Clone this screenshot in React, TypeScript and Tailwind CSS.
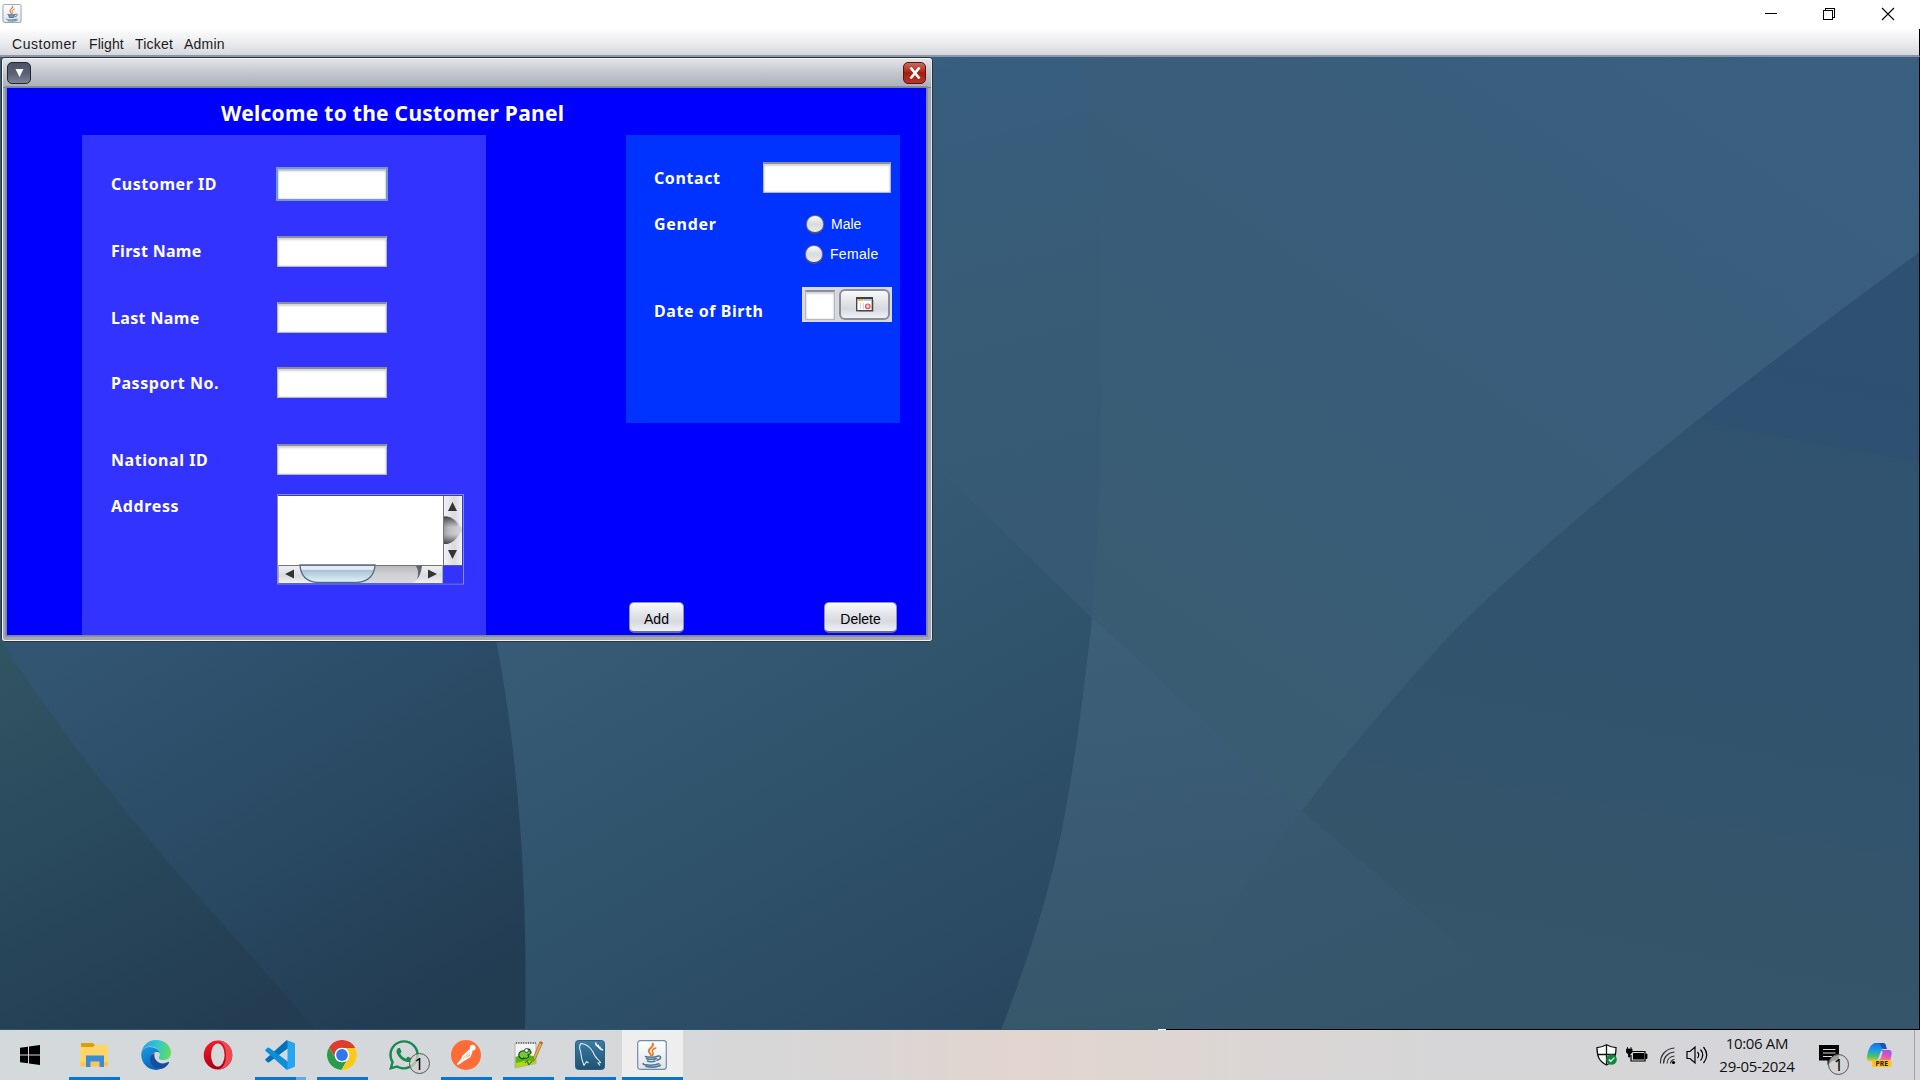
import React from "react";
import { FaWhatsapp } from "react-icons/fa";

const ARIAL = "font-['Liberation_Sans',Arial,sans-serif]";
const HUMANIST = "font-['Noto_Sans','Open_Sans',sans-serif]";

function JavaIcon({ className, id }: { className: string; id: string }) {
  return (
    <svg viewBox="0 0 30 30" className={className}>
      <defs>
        <linearGradient id={id} x1="0" y1="0" x2="0" y2="1">
          <stop offset="0" stopColor="#ffffff" />
          <stop offset="1" stopColor="#dfe3e8" />
        </linearGradient>
      </defs>
      <rect x="0.7" y="0.7" width="28.6" height="28.6" rx="2.5" fill={`url(#${id})`} stroke="#6f8da8" strokeWidth="1.2" />
      <g fill="none" strokeLinecap="round">
        <path d="M15.800 3.500c1.900 3.600-5.600 4.800-3.800 8.500.6 1.200 1.800 1.700 2 3.500" stroke="#e8792b" strokeWidth="1.900" />
        <path d="M18.800 8c-3.300 1.200-4.500 2.800-3 4.500.9 1 .4 2-.6 2.900" stroke="#e8792b" strokeWidth="1.500" />
        <path d="M8.500 16.500c2 .9 9.500.9 11.500 0M9.500 18.500c1.500 1 8 1 9.700 0M10.500 21c1.500.9 6 .9 7.500 0" stroke="#4e7896" strokeWidth="1.600" />
        <path d="M20.500 16.200c4-1.200 4.500 2.500-.5 4" stroke="#4e7896" strokeWidth="1.500" />
        <path d="M6.500 23.500c-3 1.500 10 2.700 15.500.300M9 26.600c5 .8 12 .5 14.500-1.400" stroke="#4e7896" strokeWidth="1.500" />
      </g>
    </svg>
  );
}

function TitleBar() {
  return (
    <header className="flex h-[29px] items-start justify-between bg-white">
      <JavaIcon id="jt" className="ml-[2px] mt-[4px] h-[19px] w-[20px]" />
      <svg width="180" height="29" fill="none" stroke="#000" shapeRendering="crispEdges">
        <path d="M25 13.500h12" />
        <path d="M83.500 10.500h9v9h-9zM85.500 10v-1.500h9v9H93" />
        <path d="M142 8l12 12M154 8l-12 12" shapeRendering="auto" strokeWidth="1.100" />
      </svg>
    </header>
  );
}

function MenuBar() {
  return (
    <nav
      className={`flex h-[28px] items-start border-b-2 border-[#8e95a3] border-r border-r-black bg-gradient-to-b from-[#fdfdfd] via-[#ecedf0] to-[#d5d8de] pl-3 pt-[7px] text-[14px] leading-[17px] text-[#1c1c1c] ${ARIAL}`}
    >
      <span className="w-[77px] tracking-[0.55px]">Customer</span>
      <span className="w-[46px] tracking-[0.1px]">Flight</span>
      <span className="w-[49px] tracking-[0.2px]">Ticket</span>
      <span className="tracking-[0.2px]">Admin</span>
    </nav>
  );
}

function Wallpaper() {
  return (
    <svg className="absolute inset-0" width="1920" height="973" viewBox="0 57 1920 973" preserveAspectRatio="none">
      <defs>
        <linearGradient id="sky" gradientUnits="userSpaceOnUse" x1="1800" y1="57" x2="1250" y2="850">
          <stop offset="0" stopColor="#3a5f80" />
          <stop offset="0.5" stopColor="#395d79" />
          <stop offset="1" stopColor="#395c70" />
        </linearGradient>
        <linearGradient id="fan" gradientUnits="userSpaceOnUse" x1="1100" y1="620" x2="1160" y2="1030">
          <stop offset="0" stopColor="#3c6077" />
          <stop offset="0.5" stopColor="#3a5a74" />
          <stop offset="1" stopColor="#365669" />
        </linearGradient>
        <linearGradient id="right" gradientUnits="userSpaceOnUse" x1="1800" y1="300" x2="1660" y2="1030">
          <stop offset="0" stopColor="#2f5270" />
          <stop offset="0.5" stopColor="#31536d" />
          <stop offset="1" stopColor="#34556a" />
        </linearGradient>
        <linearGradient id="low" gradientUnits="userSpaceOnUse" x1="1290" y1="830" x2="1380" y2="1030">
          <stop offset="0" stopColor="#38586f" />
          <stop offset="1" stopColor="#34556a" />
        </linearGradient>
        <linearGradient id="upper" gradientUnits="userSpaceOnUse" x1="930" y1="57" x2="1060" y2="560">
          <stop offset="0" stopColor="#385e80" />
          <stop offset="0.5" stopColor="#385c76" />
          <stop offset="1" stopColor="#375973" />
        </linearGradient>
        <linearGradient id="mid" gradientUnits="userSpaceOnUse" x1="560" y1="560" x2="860" y2="1100">
          <stop offset="0" stopColor="#395d78" />
          <stop offset="0.5" stopColor="#30536c" />
          <stop offset="1" stopColor="#29465f" />
        </linearGradient>
        <linearGradient id="arc" gradientUnits="userSpaceOnUse" x1="130" y1="620" x2="380" y2="1040">
          <stop offset="0" stopColor="#325572" />
          <stop offset="0.5" stopColor="#2a4a64" />
          <stop offset="1" stopColor="#223c52" />
        </linearGradient>
        <linearGradient id="left" gradientUnits="userSpaceOnUse" x1="0" y1="650" x2="200" y2="1040">
          <stop offset="0" stopColor="#315463" />
          <stop offset="0.55" stopColor="#28475b" />
          <stop offset="1" stopColor="#233c52" />
        </linearGradient>
        <clipPath id="hill">
          <path d="M1920 252C1750 375 1560 525 1454 631C1390 700 1340 760 1302 811L1560 1030H1920z" />
        </clipPath>
      </defs>
      <rect y="57" width="1920" height="973" fill="url(#sky)" />
      <path d="M1092 618L1302 811Q1233 895 1170 1030H980V618z" fill="url(#fan)" />
      <path d="M1920 252C1750 375 1560 525 1454 631C1390 700 1340 760 1302 811L1560 1030H1920z" fill="url(#right)" />
      <path d="M1302 811Q1222 905 1168 1030H1560z" fill="url(#low)" />
      <g clipPath="url(#hill)">
        <path d="M1600 405L1700 422L1920 462V200H1600z" fill="#2e5071" opacity="0.600" />
        <path d="M1300 750L1920 860V1030H1300z" fill="#36566a" opacity="0.350" />
      </g>
      <path d="M400 57H1080Q1094 120 1100 250Q1104 470 1092 618L930 470z" fill="url(#upper)" />
      <path d="M400 57L930 460L1092 618Q1080 730 1066 808Q1048 910 1001 1030H400z" fill="url(#mid)" />
      <path d="M0 600H488Q530 790 525 1030H0z" fill="url(#arc)" />
      <path d="M0 638C60 735 150 842 199 897L316 1030H0z" fill="url(#left)" />
      <path d="M0 1029.500H1158" stroke="#34536b" />
      <path d="M1158 1029.500h9" stroke="#fff" />
      <path d="M1166 1029.500H1920M1919.500 57V1030" stroke="#000" />
    </svg>
  );
}

function Field({ className }: { className: string }) {
  return (
    <div
      className={`shrink-0 border border-[#b4b6c0] border-t-2 border-t-[#8b8d98] bg-white shadow-[inset_0_2px_2px_#d4d4d6,inset_0_0_2px_#c8c8cc] ${className}`}
    />
  );
}

function Label({ className, children }: { className: string; children: string }) {
  return (
    <span className={`shrink-0 whitespace-nowrap text-[16px] font-bold leading-[20px] text-white ${HUMANIST} ${className}`}>
      {children}
    </span>
  );
}

const glossy = "bg-gradient-to-b from-[#f8f9fb] via-[#d6d9df] via-65% to-[#eef1f7]";

function AddressArea() {
  return (
    <svg width="187" height="91" className="shrink-0">
      <defs>
        <linearGradient id="track" x1="0" y1="0" x2="0" y2="1">
          <stop offset="0" stopColor="#b6b7ba" />
          <stop offset="0.5" stopColor="#cfd0d5" />
          <stop offset="1" stopColor="#d8d9df" />
        </linearGradient>
        <linearGradient id="thumb" x1="0" y1="0" x2="0" y2="1">
          <stop offset="0" stopColor="#dfe9f1" />
          <stop offset="0.25" stopColor="#e3edf4" />
          <stop offset="0.3" stopColor="#a9c1d5" />
          <stop offset="1" stopColor="#e3f4fb" />
        </linearGradient>
        <linearGradient id="btnh" x1="0" y1="0" x2="0" y2="1">
          <stop offset="0" stopColor="#f2f3f5" />
          <stop offset="0.6" stopColor="#d9dbdf" />
          <stop offset="1" stopColor="#f0f1f4" />
        </linearGradient>
        <linearGradient id="btnv" x1="0" y1="0" x2="1" y2="0">
          <stop offset="0" stopColor="#f2f3f5" />
          <stop offset="0.6" stopColor="#d9dbdf" />
          <stop offset="1" stopColor="#f0f1f4" />
        </linearGradient>
        <linearGradient id="hole" x1="0" y1="0" x2="1" y2="0">
          <stop offset="0" stopColor="#9a9b9f" />
          <stop offset="0.350" stopColor="#bfc0c5" />
          <stop offset="1" stopColor="#d4d5da" />
        </linearGradient>
        <linearGradient id="rim" x1="0" y1="0" x2="0" y2="1">
          <stop offset="0" stopColor="#333333" stopOpacity="0.9" />
          <stop offset="0.4" stopColor="#555555" stopOpacity="0" />
          <stop offset="0.65" stopColor="#555555" stopOpacity="0" />
          <stop offset="1" stopColor="#333333" stopOpacity="0.9" />
        </linearGradient>
      </defs>
      <rect x="0.500" y="0.500" width="186" height="89.500" fill="none" stroke="#8a8fae" />
      <rect x="1" y="2" width="165" height="69" fill="#fff" />
      <rect x="166" y="2" width="19" height="69" fill="url(#btnv)" />
      <path d="M166 22.500h4Q180 24 183 32l2 1.500v4l-2 1.500Q180 48 170 50h-4z" fill="url(#hole)" />
      <path d="M166 22.500h4Q178 24 181 31Q175 36.500 181 41Q178 48 170 50h-4z" fill="url(#rim)" />
      <path d="M166.500 2V71" stroke="#74767d" />
      <path d="M175.500 8l4.500 9h-9zM175.500 65l4.500-9h-9z" fill="#333" />
      <rect x="1" y="71" width="165" height="18" fill="url(#btnh)" />
      <rect x="60" y="71" width="86" height="18" fill="url(#track)" />
      <path d="M138 71h7q-1 11-5 15Q143 76 138 71z" fill="#4b4c50" opacity="0.800" />
      <path d="M145.500 71Q144 84 136 89h14V71z" fill="url(#btnh)" />
      <path d="M23 71Q24 87 40 88.500H80Q97 87 98 71z" fill="url(#thumb)" stroke="#4f6f87" strokeWidth="1.400" />
      <path d="M1 71.500H185" stroke="#74767d" />
      <path d="M8 80l9-4.500v9zM160 80l-9-4.500v9z" fill="#333" />
      <path d="M1.500 71V89M165.500 71v18" stroke="#a9abb2" />
      <rect x="166" y="71.500" width="19.500" height="18" fill="#3333ff" />
    </svg>
  );
}

const fields = [
  { label: "Customer ID", row: "mt-[32px] h-[34px]", text: "mt-[7px]", track: "tracking-[0.55px]" },
  { label: "First Name", row: "mt-[35px] h-[31px]", text: "mt-[5px]", track: "tracking-[0.3px]" },
  { label: "Last Name", row: "mt-[35px] h-[31px]", text: "mt-[6px]", track: "tracking-[0.35px]" },
  { label: "Passport No.", row: "mt-[34px] h-[31px]", text: "mt-[6px]", track: "tracking-[0.55px]" },
  { label: "National ID", row: "mt-[46px] h-[31px]", text: "mt-[6px]", track: "tracking-[0.55px]" },
];

function IdentityPanel() {
  return (
    <section className="flex h-[500px] w-[404px] shrink-0 flex-col bg-[#3333ff] pl-[29px]">
      {fields.map((f, i) => (
        <div key={f.label} className={`flex items-start ${f.row}`}>
          <div className={`flex ${i === 0 ? "w-[165px]" : "w-[166px]"}`}>
            <Label className={`${f.text} ${f.track}`}>{f.label}</Label>
          </div>
          {i === 0 ? (
            <div className="h-[34px] w-[112px] border-2 border-[#7497cf] bg-white shadow-[inset_0_2px_2px_#b4bcc8,inset_0_0_2px_#a8b4c8]" />
          ) : (
            <Field className="h-[31px] w-[110px]" />
          )}
        </div>
      ))}
      <div className="mt-[19px] flex items-start">
        <div className="flex w-[166px]">
          <Label className="mt-[2px] tracking-[0.65px]">Address</Label>
        </div>
        <AddressArea />
      </div>
    </section>
  );
}

function Radio({ label, className, track }: { label: string; className: string; track: string }) {
  return (
    <div className={`flex h-[20px] items-center ${className}`}>
      <span className="h-[19px] w-[18px] rounded-full border border-[#66707f] border-b-2 border-b-[#4c5668] bg-gradient-to-b from-[#fbfbfc] via-[#d8dae0] to-[#ececf1]" />
      <span className={`ml-[7px] text-[14px] leading-[16px] text-white ${ARIAL} ${track}`}>{label}</span>
    </div>
  );
}

function CalendarGlyph() {
  return (
    <svg width="19" height="16">
      <path d="M3 3h15v12H3z" fill="#b3b6bc" />
      <rect x="0.700" y="0.700" width="15.600" height="13" fill="#fff" stroke="#3f3f3f" strokeWidth="1.300" />
      <path d="M0 1.200h17" stroke="#3f3f3f" strokeWidth="2" />
      <path d="M1.500 3h6" stroke="#e8b33c" strokeWidth="1.600" />
      <path d="M8 3h7.500" stroke="#9cc6d8" strokeWidth="1.600" />
      <path d="M4.500 6v6M7.500 6v6" stroke="#d4d4d4" />
      <circle cx="11.800" cy="9.300" r="2.300" fill="#fbd5d5" stroke="#e25050" strokeWidth="1.200" />
    </svg>
  );
}

function DetailsPanel() {
  return (
    <section className="flex h-[288px] w-[274px] flex-col bg-[#0033ff] pl-[28px]">
      <div className="mt-[27px] flex items-start">
        <div className="flex w-[109px]">
          <Label className="mt-[6px] tracking-[0.6px]">Contact</Label>
        </div>
        <Field className="h-[31px] w-[128px]" />
      </div>
      <div className="mt-[21px] flex items-start">
        <div className="flex w-[152px]">
          <Label className="tracking-[0.7px]">Gender</Label>
        </div>
        <div className="flex flex-col">
          <Radio label="Male" className="" track="" />
          <Radio label="Female" className="-ml-[1px] mt-[10px]" track="tracking-[0.3px]" />
        </div>
      </div>
      <div className="mt-[23px] flex items-start">
        <div className="flex w-[148px]">
          <Label className="mt-[14px] tracking-[0.55px]">Date of Birth</Label>
        </div>
        <div className="flex h-[35px] w-[90px] items-start bg-[#d6d9df] pl-[3px] pt-[2px]">
          <Field className="mt-[1px] h-[30px] w-[30px]" />
          <div className={`ml-[4px] flex h-[31px] w-[51px] items-center justify-center rounded-[6px] border-2 border-[#8a8e97] pl-[1px] ${glossy}`}>
            <CalendarGlyph />
          </div>
        </div>
      </div>
    </section>
  );
}

function PushButton({ label, className }: { label: string; className: string }) {
  return (
    <button
      className={`flex h-[31px] items-center justify-center rounded-[5px] border border-[#8f94b5] border-b-2 border-b-[#6a6f86] pt-[3px] text-[14px] leading-[16px] text-black ${glossy} ${ARIAL} ${className}`}
    >
      {label}
    </button>
  );
}

function InternalFrame() {
  return (
    <div className="absolute left-[1px] top-0 flex h-[585px] w-[932px] flex-col rounded-[4px] border border-[#2b3440] bg-[#a4a8b2]">
      <div className="flex min-h-0 flex-1 flex-col rounded-[3px] border border-[#f0f1f3] border-r-[#e4e5e8]">
        <div className="flex h-[29px] shrink-0 items-start justify-between border-b border-[#7d808c] bg-gradient-to-b from-[#e2e4e6] via-[#c3c6cd] to-[#abafb8] pl-[4px] pr-[5px] pt-[3px]">
          <span className="flex h-[22px] w-[24px] items-center justify-center rounded-[5px] border border-[#23272f] bg-gradient-to-b from-[#4a5263] via-[#596275] to-[#7b8496]">
            <svg width="9" height="9">
              <path d="M0.500 0h8L4.500 8z" fill="#fff" />
            </svg>
          </span>
          <span className="flex h-[22px] w-[23px] items-center justify-center rounded-[5px] border border-[#5c1410] bg-gradient-to-b from-[#c9695f] via-[#a8190f] to-[#b5352b] pl-[1px]">
            <svg width="12" height="12">
              <path d="M1.500 0.500L10.500 11.500M10.500 0.500L1.500 11.500" stroke="#fff" strokeWidth="2.600" />
            </svg>
          </span>
        </div>
        <div className="ml-[4px] h-[547px] w-[919px] shrink-0 overflow-hidden bg-[#0000ff] shadow-[0_0_0_1px_#80848f,0_0_0_2px_#8c9099]">
          <div className="flex h-[47px] items-start pl-[214px] pt-[13px]">
            <h1 className={`whitespace-nowrap text-[21px] font-bold leading-[24px] tracking-[0.27px] text-white ${HUMANIST}`}>
              Welcome to the Customer Panel
            </h1>
          </div>
          <div className="flex pl-[75px]">
            <IdentityPanel />
            <div className="ml-[140px] flex w-[274px] flex-col">
              <DetailsPanel />
              <div className="mt-[179px] flex justify-between pl-[3px] pr-[3px]">
                <PushButton label="Add" className="w-[55px]" />
                <PushButton label="Delete" className="w-[73px]" />
              </div>
            </div>
          </div>
        </div>
      </div>
    </div>
  );
}

function Task({ children, open }: { children: React.ReactNode; open?: boolean }) {
  return (
    <div className={`flex h-[50px] w-[51px] shrink-0 justify-center border-b-[3px] pr-[2px] pt-[10px] ${open ? "border-[#0078d7]" : "border-transparent"}`}>
      {children}
    </div>
  );
}

function ExplorerIcon() {
  return (
    <svg width="30" height="30">
      <path d="M2 3h12l2 2v5H2z" fill="#dd9f06" />
      <path d="M1.500 7H14l2-2h13v21H1.500z" fill="#ffd567" />
      <path d="M1.500 22h27.500v4.500h-27.500z" fill="#f9c850" />
      <path d="M7 15.500h18V27h-4.500v-5.500h-9V27H7z" fill="#3a8ad6" />
    </svg>
  );
}

function EdgeIcon() {
  return (
    <svg width="30" height="30" viewBox="0 0 30 30">
      <defs>
        <linearGradient id="eg" x1="0" y1="0.300" x2="1" y2="0.400">
          <stop offset="0" stopColor="#2a9fe0" />
          <stop offset="0.500" stopColor="#33c3d6" />
          <stop offset="1" stopColor="#5fe05a" />
        </linearGradient>
        <linearGradient id="eb" x1="0" y1="0" x2="0.500" y2="1">
          <stop offset="0" stopColor="#1b9de2" />
          <stop offset="1" stopColor="#0c63b8" />
        </linearGradient>
      </defs>
      <path d="M0.200 14C1 6 7 0 15 0c9 0 15 6 15 12.500 0 5-3.500 7.500-7.500 7.500-3.500 0-5-1.300-4.700-2.600.3-.9 1-1.400 1-3.200C18.800 10 14 6.500 9 6.500 4 6.500.8 10.500.2 14z" fill="url(#eg)" />
      <path d="M0.200 14C1 9.500 4.500 7 9 7c5 0 9.500 3 9.800 6.500-2-2.800-7.300-1.500-8.300 3.500-.8 5 2.500 10.500 8.500 12.300C10 32 0 25.500 0.200 14z" fill="url(#eb)" />
      <path d="M13.500 13c-4.500 2-5.500 7-2.800 11.200 3 4.500 8.300 5.800 11.800 4 3.500-1.700 5.500-4.700 5.500-5.700s-.8-.6-1.500-.2c-6.500 3.300-14.500-1-13-9.300z" fill="#134f9c" />
    </svg>
  );
}

function OperaIcon() {
  return (
    <svg width="30" height="30">
      <defs>
        <linearGradient id="op" x1="0" y1="0" x2="0.300" y2="1">
          <stop offset="0" stopColor="#ff1b2d" />
          <stop offset="1" stopColor="#a70014" />
        </linearGradient>
      </defs>
      <ellipse cx="15" cy="15" rx="14.300" ry="14.500" fill="url(#op)" />
      <path d="M15 0.500a14.300 14.500 0 0 1 0 29q8-2 8-14.500T15 0.500z" fill="#ee4a53" />
      <ellipse cx="14.800" cy="15" rx="6.800" ry="11.500" fill="#d6d9da" />
    </svg>
  );
}

function CodeIcon() {
  return (
    <svg width="30" height="30" viewBox="0 0 30 30" className="mr-[1px]">
      <path d="M21.500 0.200L30 3.500 22 9 4.200 22.300q-.8.600-1.600 0L.6 20.500q-.8-.8 0-1.600z" fill="#0072b5" />
      <path d="M21.500 29.800L30 26.500 22 21 4.200 7.700q-.8-.6-1.600 0L.6 9.500q-.8.8 0 1.600z" fill="#0b90d8" />
      <path d="M21.500 29.900Q22.500 29 22.500 28V2q0-1-1-1.800L29 3q1 .5 1 1.500v21q0 1-1 1.500z" fill="#27a5ef" />
    </svg>
  );
}

function ChromeIcon() {
  return (
    <svg width="30" height="30" viewBox="0 0 30 30">
      <circle cx="15" cy="15" r="15" fill="#fff" />
      <path d="M15 8H28.300A15 15 0 0 0 2 7.500L8.800 18.500A7 7 0 0 1 15 8z" fill="#dc3d2f" />
      <path d="M8.900 18.500L2 7.500A15 15 0 0 0 14.500 30L21 18.700A7 7 0 0 1 8.900 18.500z" fill="#2a9b4a" />
      <path d="M15 8A7 7 0 0 1 21 18.700L14.500 30A15 15 0 0 0 28.300 8z" fill="#fcc921" />
      <circle cx="15" cy="15" r="7.300" fill="#fff" />
      <circle cx="15" cy="15" r="5.900" fill="#2f78ec" />
    </svg>
  );
}

function Badge({ className }: { className: string }) {
  return (
    <span
      className={`absolute flex h-[21px] w-[21px] items-center justify-center rounded-full border border-[#555] bg-[#d0d1d2]/75 text-[16px] leading-none text-black ${HUMANIST} ${className}`}
    >
      1
    </span>
  );
}

function PostmanIcon() {
  return (
    <svg width="30" height="30">
      <circle cx="15" cy="15" r="15" fill="#ff6c37" />
      <circle cx="21.700" cy="7.700" r="2.900" fill="#fff" />
      <path d="M19.500 11L12.500 17.500" stroke="#fff" strokeWidth="4" strokeLinecap="round" fill="none" />
      <path d="M12.500 18l-5.500 6" stroke="#fff" strokeWidth="2" strokeLinecap="round" fill="none" />
      <path d="M20.500 12l-1.500 4.500-5 3-5 3.500" stroke="#fff" strokeWidth="1.500" strokeLinecap="round" fill="none" />
      <path d="M19 12.500l-7 6" stroke="#ff9a75" strokeWidth="0.800" />
    </svg>
  );
}

function NotepadIcon() {
  return (
    <svg width="30" height="30">
      <path d="M2 3h21v20.500L2 28z" fill="#f3f5f4" stroke="#aeb2b0" />
      <path d="M2.500 17q9-5 20 0v6L2.500 27.500z" fill="#53b51c" />
      <path d="M2.500 23q9-3 20-2.500V23L2.500 27.500z" fill="#b3d80e" />
      <path d="M3 3h20" stroke="#4d4d4d" strokeWidth="1.600" strokeDasharray="1 1.400" />
      <path d="M6 16c-1-4 3-6 7-5 1-3 5-2 4 0 2 1 1 3-2 4 2 2-1 4-4 3-2 2-4 0-5-2z" fill="#73c936" stroke="#18421a" strokeWidth="1.100" />
      <circle cx="13.500" cy="10.500" r="2" fill="#dff3d0" stroke="#234" strokeWidth="0.800" />
      <path d="M12 23q3-4 3 0t4-2" stroke="#1f4d16" fill="none" />
      <path d="M20 21.500l.5-4L27 1.800l2.500 1-7 15.700z" fill="#f4b63a" stroke="#8a5a20" strokeWidth="0.700" />
      <path d="M26.500 3.200l.8-2 2.500 1-.8 2z" fill="#d8584a" />
    </svg>
  );
}

function MysqlIcon() {
  return (
    <svg width="30" height="30">
      <defs>
        <linearGradient id="my" x1="0" y1="0" x2="0" y2="1">
          <stop offset="0" stopColor="#3a7ca5" />
          <stop offset="1" stopColor="#1e5173" />
        </linearGradient>
      </defs>
      <rect x="0.500" y="0.500" width="29" height="29" rx="3" fill="url(#my)" stroke="#2d5f80" />
      <path d="M9 25.500C7.500 22 6 16 5.500 11 4 8.500 4.500 5 6 3.500c5 .5 9.500 4 12 8.500 1 2.500 2 4.500 3.500 6 1.500 1.500 3 2.500 4 4.500l-2.500.5 2 2.500M9 25.500l2.500-4 2 1.500" stroke="#dfeaf1" strokeWidth="1.100" fill="none" />
      <path d="M20.500 2.500l1 3 2.500 0M22 5.500l3.500 3.500M24.500 6.500l1 2.500 2.500 1" stroke="#fff" strokeWidth="1.500" fill="none" />
    </svg>
  );
}

function Tray() {
  return (
    <div className="ml-auto flex h-full shrink-0 items-start">
      <svg width="120" height="50" fill="none">
        <path d="M10.500 14.800c3.500 2 6 2.600 9.500 2.800 0 8-1.500 13.500-9.500 17.400C2.500 31 1 25.500 1 17.600c3.500-.2 6-.8 9.500-2.800z" fill="#fff" stroke="#111" strokeWidth="1.300" />
        <path d="M10.500 15v19.500M1 24.500h19" stroke="#111" strokeWidth="1.300" />
        <circle cx="15.500" cy="29.500" r="5.300" fill="#10893e" />
        <path d="M12.800 29.500l2 2 3.500-3.800" stroke="#fff" strokeWidth="1.200" />
        <path d="M35.500 21.500h13.500v9.500H35v-6" stroke="#000" strokeWidth="1.200" />
        <path d="M37 23h11v6.500H37z" fill="#000" />
        <path d="M49.500 24h1.500v4.500h-1.500zM30.500 19h5.500v3.500l-2 1.500v3h-1.500v-3l-2-1.500zM31.500 17v2M35 17v2" fill="#000" stroke="#000" strokeWidth="0.800" />
        <path d="M64.500 33.500C64 25 70 18.500 78.500 18M67.500 33.500C67.500 27 72 22.500 78.500 22M71 33.500C71 29.500 74 26.500 78.500 26" stroke="#333" strokeWidth="1.200" />
        <path d="M74.500 33.500c0-2 2-4 4-4" stroke="#333" strokeWidth="1.200" />
        <circle cx="77.500" cy="32.500" r="1.600" fill="#000" />
        <path d="M91 21.500h3l5-4.500v16l-5-4.500h-3z" stroke="#000" strokeWidth="1.200" />
        <path d="M101.500 22q2.500 3 0 6M104.500 19.500q4.500 5.500 0 11M107.500 17q6.500 8 0 16" stroke="#000" strokeWidth="1.200" />
      </svg>
      <div className="flex w-[82px] flex-col items-center pt-[2px] text-[15px] leading-[23px] text-[#111] font-['Open_Sans','Noto_Sans',sans-serif]">
        <span className="whitespace-nowrap tracking-[-0.35px]">10:06 AM</span>
        <span className="whitespace-nowrap tracking-[-0.3px]">29-05-2024</span>
      </div>
      <div className="relative ml-[21px] h-[50px] w-[31px]">
        <svg width="31" height="50">
          <path d="M0 15h20v15.500h-6L8.500 35v-4.500H0z" fill="#000" />
          <path d="M4 19.500h12.500M4 23h12.500M4 26.500h9" stroke="#d8d8d9" strokeWidth="1.200" />
        </svg>
        <Badge className="left-[9px] top-[24px]" />
      </div>
      <svg width="27" height="50" className="ml-[16px]">
        <defs>
          <linearGradient id="cp1" x1="0.300" y1="0" x2="0.200" y2="1">
            <stop offset="0" stopColor="#1f6fe8" />
            <stop offset="0.400" stopColor="#17a0e0" />
            <stop offset="0.750" stopColor="#4bc56a" />
            <stop offset="1" stopColor="#f2c21a" />
          </linearGradient>
          <linearGradient id="cp2" x1="0.500" y1="0" x2="0.200" y2="1">
            <stop offset="0" stopColor="#a153ea" />
            <stop offset="0.500" stopColor="#e85aa8" />
            <stop offset="1" stopColor="#ff9a5a" />
          </linearGradient>
        </defs>
        <path d="M7 14q.8-1 2-1h8q2 0 2.700 2l1 4h-3q-2 0-2.700 2L12 29q-.6 2-2.600 2H4Q.5 31 .8 27 1.500 21 4.500 16z" fill="url(#cp1)" />
        <path d="M15 20h8q3 0 2.600 4-.6 5-2 8H10l1.500-2q3 0 3.700-3l1.500-5z" fill="url(#cp2)" />
        <path d="M13 13h4q2 0 2.700 2l1 4h-3q-2-1-2.700-3z" fill="#1b4fc0" />
        <rect x="6" y="30" width="19.500" height="7" rx="1.500" fill="#ffc31a" />
        <text x="15.800" y="36" textAnchor="middle" fontSize="6.800" fontWeight="700" fontFamily="Noto Sans, sans-serif" fill="#222">
          PRE
        </text>
      </svg>
      <div className="ml-[21px] h-full w-[6px] border-l border-[#a3a3a5]" />
    </div>
  );
}

function Taskbar() {
  return (
    <footer className="flex h-[50px] bg-[linear-gradient(90deg,#d4d9dc_0%,#d6d8da_35%,#dad6d5_45%,#e3d5cf_53%,#ddd6d3_62%,#d6d6d8_75%,#d5d6da_100%)]">
      <div className="flex w-[69px] items-start pl-[20px] pt-[15px]">
        <svg width="20" height="20">
          <path d="M0 2.800l8-1.100V9.500H0zM9 1.500L20 0v9.500H9zM0 10.500h8v7.800l-8-1.100zM9 10.500h11V20L9 18.500z" fill="#000" />
        </svg>
      </div>
      <div className="flex shrink-0 gap-[11px]">
        <Task open>
          <ExplorerIcon />
        </Task>
        <Task>
          <EdgeIcon />
        </Task>
        <Task>
          <OperaIcon />
        </Task>
        <div className="flex h-[50px] w-[51px] flex-col items-center justify-between pt-[10px]">
          <CodeIcon />
          <div className="flex h-[3px] w-[51px]">
            <span className="w-[41px] bg-[#0078d7]" />
            <span className="w-[10px] bg-[#62abe6]" />
          </div>
        </div>
        <Task open>
          <ChromeIcon />
        </Task>
        <Task>
          <span className="relative -mt-[2px] h-[34px] w-[34px]">
            <FaWhatsapp size={34} color="#178a50" />
            <Badge className="left-[22px] top-[15px]" />
          </span>
        </Task>
        <Task open>
          <PostmanIcon />
        </Task>
        <Task open>
          <NotepadIcon />
        </Task>
        <Task open>
          <MysqlIcon />
        </Task>
      </div>
      <div className="ml-[6px] flex h-[50px] w-[61px] shrink-0 justify-center border-b-[3px] border-[#0078d7] bg-[#eeeeee] pr-[2px] pt-[10px]">
        <JavaIcon id="jb" className="h-[30px] w-[30px]" />
      </div>
      <Tray />
    </footer>
  );
}

export default function App() {
  return (
    <div className="flex h-[1080px] w-[1920px] flex-col overflow-hidden">
      <TitleBar />
      <MenuBar />
      <main className="relative h-[973px] shrink-0 overflow-hidden">
        <Wallpaper />
        <InternalFrame />
      </main>
      <Taskbar />
    </div>
  );
}
